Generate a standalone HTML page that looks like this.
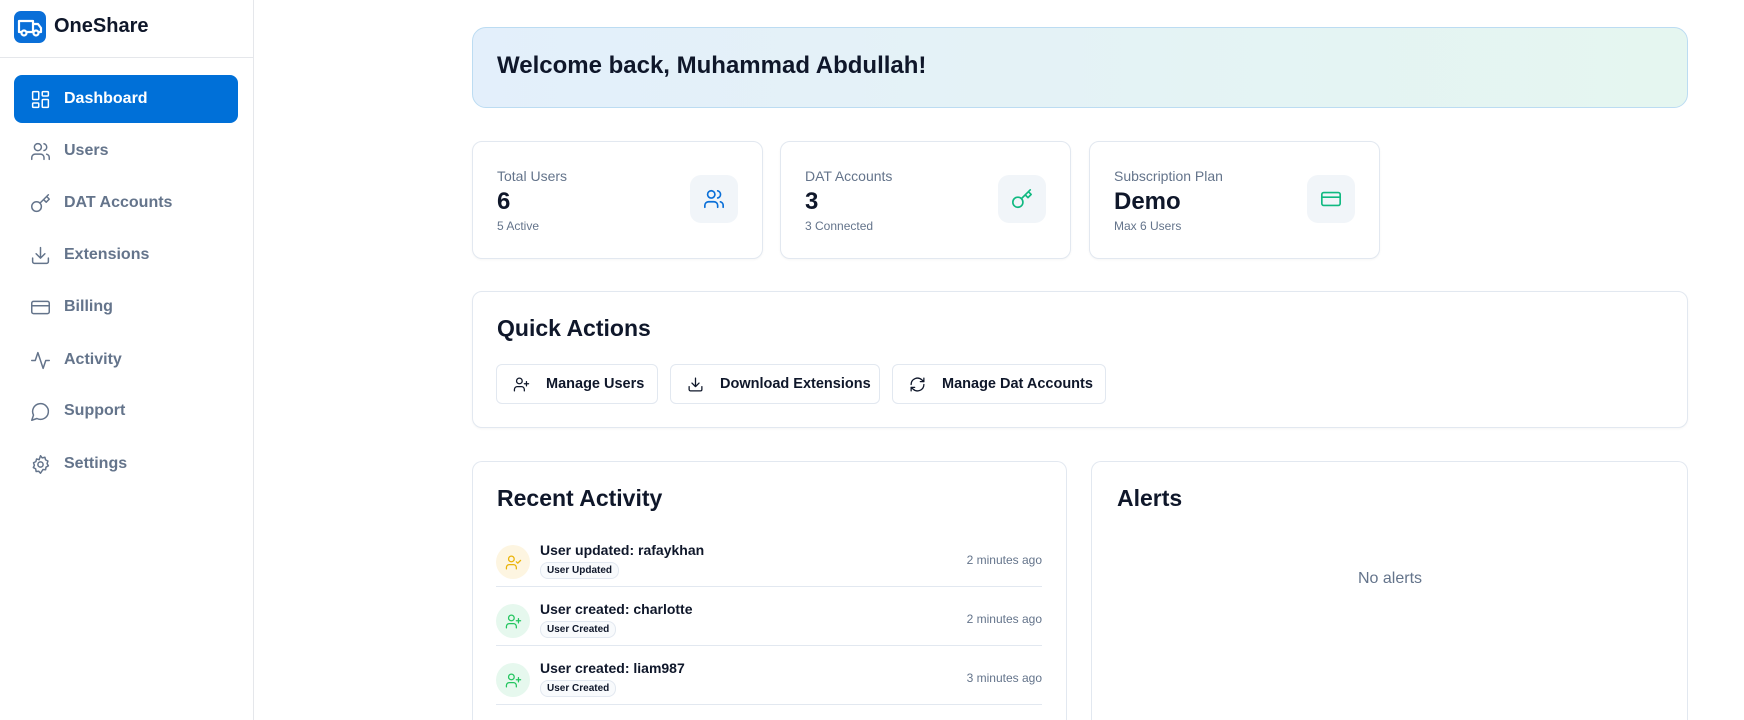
<!DOCTYPE html>
<html><head><meta charset="utf-8"><style>
*{box-sizing:border-box;margin:0;padding:0}
html,body{width:1744px;height:720px;overflow:hidden}
body{background:#fff;font-family:"Liberation Sans",sans-serif;color:#0f172a;position:relative}
.a{position:absolute}
.side{left:0;top:0;width:254px;height:720px;border-right:1px solid #e5e7eb;background:#fff}
.nav{position:absolute;left:14px;width:224px;height:48px;display:flex;align-items:center;padding-left:16px;font-size:16px;font-weight:600;color:#64748b;border-radius:8px}
.nav svg{width:21px;height:21px;margin-right:13px;fill:none;stroke:#64748b;stroke-width:1.7;stroke-linecap:round;stroke-linejoin:round}
.nav.on{background:#0070d8;color:#fff}.nav.on svg{stroke:#fff}
.card{position:absolute;border:1px solid #e2e8f0;border-radius:10px;background:#fff;box-shadow:0 1px 2px rgba(0,0,0,.04)}
.lbl{position:absolute;left:24px;top:26px;font-size:14px;color:#64748b}
.num{position:absolute;left:24px;top:46px;font-size:24px;font-weight:700;color:#0f172a}
.sub{position:absolute;left:24px;top:77px;font-size:12px;color:#64748b}
.ib{position:absolute;right:24px;top:33px;width:48px;height:48px;border-radius:11px;background:#f1f5f9;display:flex;align-items:center;justify-content:center}
.ib svg,.btn svg,.av svg{fill:none;stroke-width:1.8;stroke-linecap:round;stroke-linejoin:round}
.btn{position:absolute;top:364px;height:40px;border:1px solid #e2e8f0;border-radius:6px;display:flex;align-items:center;padding-left:16px;font-size:14.5px;font-weight:600;color:#0f172a}
.btn svg{width:17px;height:17px;stroke:#0f172a;margin-right:16px}
h2{position:absolute;font-size:23px;font-weight:700;color:#0f172a}
.row{position:absolute;left:496px;width:546px;height:50px;border-bottom:1px solid #e2e8f0}
.av{position:absolute;left:0;top:8px;width:34px;height:34px;border-radius:50%;display:flex;align-items:center;justify-content:center}
.av svg{width:17px;height:17px}
.rt{position:absolute;left:44px;top:5px;font-size:14px;font-weight:600;color:#0f172a}
.bd{position:absolute;left:44px;top:25px;font-size:10px;font-weight:700;color:#0f172a;border:1px solid #e2e8f0;border-radius:8px;padding:2px 6px;background:#f8fafc}
.tm{position:absolute;right:0;top:16px;font-size:12px;color:#64748b}
.open{border-bottom:none;border-radius:10px 10px 0 0;box-shadow:none}
</style></head><body>
<div class="a side">
  <div class="a" style="left:14px;top:11px;width:32px;height:32px;border-radius:7px;background:#0a6fd8">
    <svg width="32" height="32" viewBox="0 0 32 32" fill="none" stroke="#fff" stroke-width="2.2" stroke-linejoin="round"><path d="M5 10h14v11H5z"/><path d="M19 13h5l3 4v4h-8"/><circle cx="10" cy="22" r="2.5" fill="#0a6fd8"/><circle cx="22" cy="22" r="2.5" fill="#0a6fd8"/></svg>
  </div>
  <div class="a" style="left:54px;top:15px;font-size:20px;font-weight:700;color:#0f172a">OneShare</div>
  <div class="a" style="left:0;top:57px;width:253px;height:1px;background:#e5e7eb"></div>
  <div class="nav on" style="top:75px"><svg viewBox="0 0 24 24"><rect x="3" y="3" width="7" height="9" rx="1"/><rect x="14" y="3" width="7" height="5" rx="1"/><rect x="14" y="12" width="7" height="9" rx="1"/><rect x="3" y="16" width="7" height="5" rx="1"/></svg>Dashboard</div>
  <div class="nav" style="top:127px"><svg viewBox="0 0 24 24"><path d="M16 21v-2a4 4 0 0 0-4-4H6a4 4 0 0 0-4 4v2"/><circle cx="9" cy="7" r="4"/><path d="M22 21v-2a4 4 0 0 0-3-3.9M16 3.1a4 4 0 0 1 0 7.8"/></svg>Users</div>
  <div class="nav" style="top:179px"><svg viewBox="0 0 24 24"><circle cx="7.5" cy="15.5" r="5.5"/><path d="M21 2l-9.6 9.6M15.5 7.5l3 3L22 7l-3-3"/></svg>DAT Accounts</div>
  <div class="nav" style="top:231px"><svg viewBox="0 0 24 24"><path d="M21 15v4a2 2 0 0 1-2 2H5a2 2 0 0 1-2-2v-4M7 10l5 5 5-5M12 15V3"/></svg>Extensions</div>
  <div class="nav" style="top:283px"><svg viewBox="0 0 24 24"><rect x="2" y="5" width="20" height="14" rx="2"/><path d="M2 10h20"/></svg>Billing</div>
  <div class="nav" style="top:336px"><svg viewBox="0 0 24 24"><path d="M22 12h-4l-3 9L9 3l-3 9H2"/></svg>Activity</div>
  <div class="nav" style="top:387px"><svg viewBox="0 0 24 24"><path d="M7.9 20A9 9 0 1 0 4 16.1L2 22z"/></svg>Support</div>
  <div class="nav" style="top:440px"><svg viewBox="0 0 24 24"><circle cx="12" cy="12" r="3"/><path d="M12 2l2 2.5 3-.8.8 3L20.5 8l-1 3 1.5 2.5-2.7 1.5-.5 3-3-.3L12 22l-2-2.3-3 .3-.5-3L3.8 15.5 5 13l-1-3 2.7-1.3.8-3 3 .8z"/></svg>Settings</div>
</div>

<div class="a" style="left:472px;top:27px;width:1216px;height:81px;border:1px solid #bcdcf2;border-radius:14px;background:linear-gradient(90deg,#e3effb,#e5f6f0)"></div>
<div class="a" style="left:497px;top:52px;font-size:24px;font-weight:700;color:#0f172a">Welcome back, Muhammad Abdullah!</div>

<div class="card" style="left:472px;top:141px;width:291px;height:118px">
  <div class="lbl">Total Users</div><div class="num">6</div><div class="sub">5 Active</div>
  <div class="ib"><svg width="22" height="22" viewBox="0 0 24 24" stroke="#0a6fd8"><path d="M16 21v-2a4 4 0 0 0-4-4H6a4 4 0 0 0-4 4v2"/><circle cx="9" cy="7" r="4"/><path d="M22 21v-2a4 4 0 0 0-3-3.9M16 3.1a4 4 0 0 1 0 7.8"/></svg></div>
</div>
<div class="card" style="left:780px;top:141px;width:291px;height:118px">
  <div class="lbl">DAT Accounts</div><div class="num">3</div><div class="sub">3 Connected</div>
  <div class="ib"><svg width="22" height="22" viewBox="0 0 24 24" stroke="#10b981"><circle cx="7.5" cy="15.5" r="5.5"/><path d="M21 2l-9.6 9.6M15.5 7.5l3 3L22 7l-3-3"/></svg></div>
</div>
<div class="card" style="left:1089px;top:141px;width:291px;height:118px">
  <div class="lbl">Subscription Plan</div><div class="num">Demo</div><div class="sub">Max 6 Users</div>
  <div class="ib"><svg width="22" height="22" viewBox="0 0 24 24" stroke="#10b981"><rect x="2" y="5" width="20" height="14" rx="2"/><path d="M2 10h20"/></svg></div>
</div>

<div class="card" style="left:472px;top:291px;width:1216px;height:137px"></div>
<h2 style="left:497px;top:315px">Quick Actions</h2>
<div class="btn" style="left:496px;width:162px"><svg viewBox="0 0 24 24"><path d="M16 21v-2a4 4 0 0 0-4-4H6a4 4 0 0 0-4 4v2"/><circle cx="9" cy="7" r="4"/><path d="M19 8v6M22 11h-6"/></svg>Manage Users</div>
<div class="btn" style="left:670px;width:210px"><svg viewBox="0 0 24 24"><path d="M21 15v4a2 2 0 0 1-2 2H5a2 2 0 0 1-2-2v-4M7 10l5 5 5-5M12 15V3"/></svg>Download Extensions</div>
<div class="btn" style="left:892px;width:214px"><svg viewBox="0 0 24 24"><path d="M3 12a9 9 0 0 1 15-6.7L21 8M21 3v5h-5M21 12a9 9 0 0 1-15 6.7L3 16M8 16H3v5"/></svg>Manage Dat Accounts</div>

<div class="card open" style="left:472px;top:461px;width:595px;height:259px"></div>
<div class="card open" style="left:1091px;top:461px;width:597px;height:259px"></div>
<h2 style="left:497px;top:485px">Recent Activity</h2>
<h2 style="left:1117px;top:485px">Alerts</h2>
<div class="a" style="left:1358px;top:570px;font-size:16px;color:#64748b">No alerts</div>

<div class="row" style="top:537px">
  <div class="av" style="background:#fdf5e1"><svg viewBox="0 0 24 24" stroke="#eab308"><path d="M16 21v-2a4 4 0 0 0-4-4H6a4 4 0 0 0-4 4v2"/><circle cx="9" cy="7" r="4"/><path d="M16 11l2 2 4-4"/></svg></div>
  <div class="rt">User updated: rafaykhan</div><div class="bd">User Updated</div><div class="tm">2 minutes ago</div>
</div>
<div class="row" style="top:596px">
  <div class="av" style="background:#e6f8ee"><svg viewBox="0 0 24 24" stroke="#22c55e"><path d="M16 21v-2a4 4 0 0 0-4-4H6a4 4 0 0 0-4 4v2"/><circle cx="9" cy="7" r="4"/><path d="M19 8v6M22 11h-6"/></svg></div>
  <div class="rt">User created: charlotte</div><div class="bd">User Created</div><div class="tm">2 minutes ago</div>
</div>
<div class="row" style="top:655px">
  <div class="av" style="background:#e6f8ee"><svg viewBox="0 0 24 24" stroke="#22c55e"><path d="M16 21v-2a4 4 0 0 0-4-4H6a4 4 0 0 0-4 4v2"/><circle cx="9" cy="7" r="4"/><path d="M19 8v6M22 11h-6"/></svg></div>
  <div class="rt">User created: liam987</div><div class="bd">User Created</div><div class="tm">3 minutes ago</div>
</div>
</body></html>
